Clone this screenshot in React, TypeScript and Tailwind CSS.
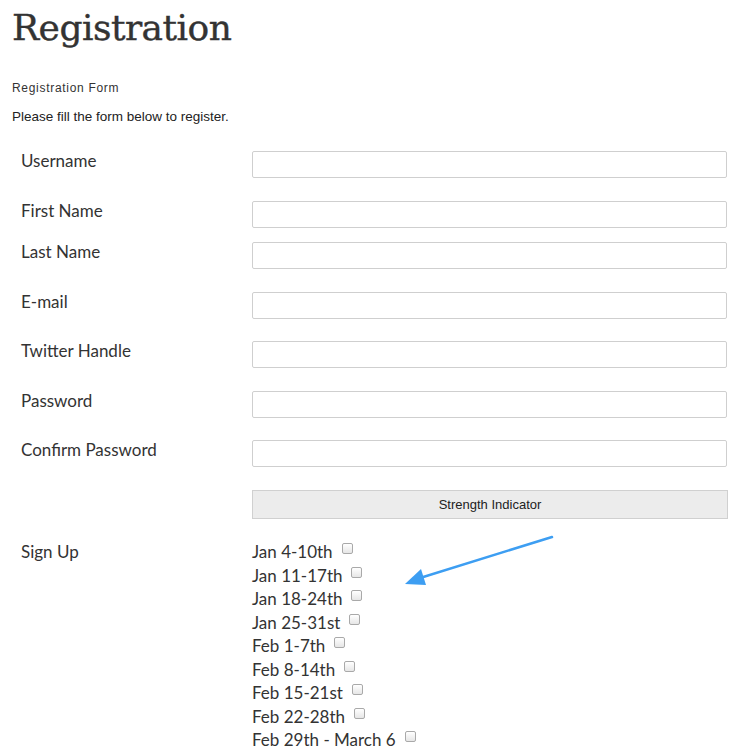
import React from "react";

const FIELDS: { label: string; h: string }[] = [
  { label: "Username", h: "h-[50px]" },
  { label: "First Name", h: "h-[41px]" },
  { label: "Last Name", h: "h-[50px]" },
  { label: "E-mail", h: "h-[49px]" },
  { label: "Twitter Handle", h: "h-[50px]" },
  { label: "Password", h: "h-[49px]" },
  { label: "Confirm Password", h: "h-[50px]" },
];

const WEEKS = [
  "Jan 4-10th",
  "Jan 11-17th",
  "Jan 18-24th",
  "Jan 25-31st",
  "Feb 1-7th",
  "Feb 8-14th",
  "Feb 15-21st",
  "Feb 22-28th",
  "Feb 29th - March 6",
];

const Box = () => (
  <span className="ml-[9px] mb-[6px] inline-block w-[11px] h-[11px] rounded-[2px] border border-[#a9a9a9] bg-gradient-to-b from-white to-[#e6e6e6]" />
);

export default function App() {
  return (
    <div className="relative w-[747px] h-[753px] bg-white text-[#333] overflow-hidden">
      <div className="pl-3 pt-[7px]">
        <h1 className="font-['DejaVu_Serif',serif] text-[36px] leading-[42px] tracking-[-0.5px] text-[#333] [-webkit-text-stroke:0.4px_#333]">
          Registration
        </h1>
        <p className="mt-[32px] font-['Liberation_Sans',sans-serif] text-[12px] tracking-[0.7px] leading-[14px] text-[#333]">
          Registration Form
        </p>
        <p className="mt-[14px] font-['Liberation_Sans',sans-serif] text-[13.5px] leading-[15px] text-[#222]">
          Please fill the form below to register.
        </p>
      </div>

      <div className="mt-[27px] pl-[21px] font-['Lato',sans-serif] text-[17px]">
        {FIELDS.map((f) => (
          <div key={f.label} className={`flex ${f.h}`}>
            <div className="w-[231px] leading-[20px]">{f.label}</div>
            <div className="w-[475px] h-[27px] rounded-[2px] border border-[#cfcfcf] bg-white" />
          </div>
        ))}
        <div className="flex h-[50px]">
          <div className="w-[231px]" />
          <div className="w-[476px] h-[29px] border border-[#d0d0d0] bg-[#ececec] flex items-center justify-center font-['Liberation_Sans',sans-serif] text-[13px] text-[#222]">
            Strength Indicator
          </div>
        </div>
        <div className="flex">
          <div className="w-[231px] leading-[23.5px]">Sign Up</div>
          <div className="flex flex-col">
            {WEEKS.map((w) => (
              <div key={w} className="flex items-center h-[23.5px] leading-[23.5px]">
                <span>{w}</span>
                <Box />
              </div>
            ))}
          </div>
        </div>
      </div>

      <svg className="absolute left-0 top-0 pointer-events-none" width="747" height="753">
        <line x1="552" y1="537" x2="420" y2="578" stroke="#3d9ef2" strokeWidth="2.5" strokeLinecap="round" />
        <polygon points="405,584 421,569 426,585" fill="#3d9ef2" />
      </svg>
    </div>
  );
}
